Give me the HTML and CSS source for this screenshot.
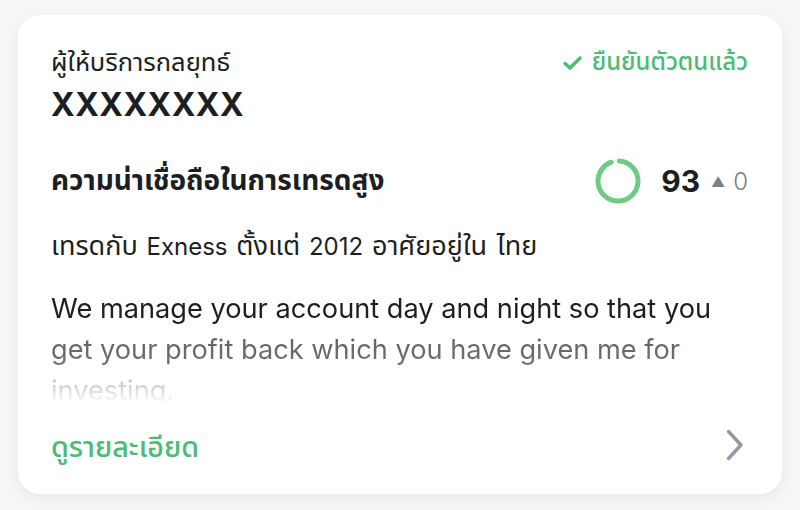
FILE: index.html
```html
<!DOCTYPE html>
<html lang="th">
<head>
<meta charset="utf-8">
<link rel="stylesheet" href="styles.css">
</head>
<body>
<div class="card">
  <div class="head">
    <div class="head-left">
      <div class="label">ผู้ให้บริการกลยุทธ์</div>
      <div class="name">XXXXXXXX</div>
    </div>
    <div class="verified">
      <svg class="check" width="21" height="16" viewBox="0 0 21 16"><path d="M3 8.5 L8 13 L18 3" fill="none" stroke="#4cbb74" stroke-width="3.4" stroke-linecap="round" stroke-linejoin="round"/></svg>
      <span>ยืนยันตัวตนแล้ว</span>
    </div>
  </div>
  <div class="trust">
    <div class="trust-label">ความน่าเชื่อถือในการเทรดสูง</div>
    <div class="score">
      <svg class="ring" width="46" height="46" viewBox="0 0 46 46">
        <circle cx="23" cy="23" r="20" fill="none" stroke="#6fcb83" stroke-width="5" stroke-linecap="round" stroke-dasharray="116.5 200" transform="rotate(-86 23 23)"/>
      </svg>
      <span class="num">93</span>
      <span class="tri">▲</span>
      <span class="delta">0</span>
    </div>
  </div>
  <div class="since"><span class="th">เทรดกับ</span> Exness <span class="th">ตั้งแต่</span> 2012 <span class="th">อาศัยอยู่ใน ไทย</span></div>
  <div class="desc">We manage your account day and night so that you get your profit back which you have given me for investing.</div>
  <div class="foot">
    <span class="more">ดูรายละเอียด</span>
    <svg class="chev" width="20" height="34" viewBox="0 0 20 34"><path d="M3.5 3.5 L16 17 L3.5 30.5" fill="none" stroke="#8e9ba7" stroke-width="3.4" stroke-linecap="round" stroke-linejoin="round"/></svg>
  </div>
</div>
</body>
</html>
```
FILE: styles.css
```css
html, body {
  margin: 0;
  padding: 0;
  background: #f6f6f6;
}
body {
  width: 800px;
  height: 510px;
  padding: 15px 18px 16px 18px;
  box-sizing: border-box;
  font-family: "Inter", "Noto Sans Thai", "Noto Sans", sans-serif;
  color: #1b1f23;
}
.card {
  background: #ffffff;
  border-radius: 22px;
  box-shadow: 0 4px 14px rgba(0,0,0,0.06);
  height: 479px;
  box-sizing: border-box;
  padding: 31px 34px 0 33px;
  display: flex;
  flex-direction: column;
}
.head {
  display: flex;
  justify-content: space-between;
  align-items: flex-start;
}
.label {
  font-size: 25.5px;
  line-height: 32px;
  color: #1b1f23;
}
.name {
  margin-top: 5px;
  font-size: 32px;
  font-weight: 700;
  line-height: 44px;
  letter-spacing: 0.5px;
}
.verified {
  display: flex;
  align-items: center;
  gap: 9px;
  color: #4cbb74;
  font-size: 24px;
  font-weight: 500;
  line-height: 32px;
}
.check {
  margin-top: 1px;
}
.trust {
  margin-top: 30px;
  height: 48px;
  display: flex;
  justify-content: space-between;
  align-items: center;
}
.trust-label {
  font-size: 28px;
  font-weight: 700;
}
.score {
  display: flex;
  align-items: center;
}
.ring {
  margin-right: 20px;
}
.num {
  font-size: 30px;
  font-weight: 700;
  margin-right: 11px;
}
.tri {
  font-size: 14px;
  color: #7b8085;
  margin-right: 8px;
}
.delta {
  font-size: 24px;
  font-weight: 300;
  color: #7b8085;
}
.since {
  margin-top: 23px;
  font-size: 24px;
  line-height: 36px;
  white-space: nowrap;
  word-spacing: 2px;
}
.since .th {
  font-size: 27px;
}
.desc {
  margin-top: 23px;
  font-size: 27.2px;
  line-height: 41px;
  height: 121px;
  overflow: hidden;
  -webkit-mask-image: linear-gradient(to bottom, #000 0%, #000 30%, rgba(0,0,0,0.7) 38%, rgba(0,0,0,0.64) 62%, rgba(0,0,0,0.3) 74%, rgba(0,0,0,0) 96%);
  mask-image: linear-gradient(to bottom, #000 0%, #000 30%, rgba(0,0,0,0.7) 38%, rgba(0,0,0,0.64) 62%, rgba(0,0,0,0.3) 74%, rgba(0,0,0,0) 96%);
}
.foot {
  margin-top: 18px;
  height: 36px;
  display: flex;
  justify-content: space-between;
  align-items: center;
}
.more {
  font-size: 28.7px;
  font-weight: 500;
  color: #4cbb74;
  position: relative;
  top: 3px;
}
.chev {
  margin-right: 3px;
}
```
